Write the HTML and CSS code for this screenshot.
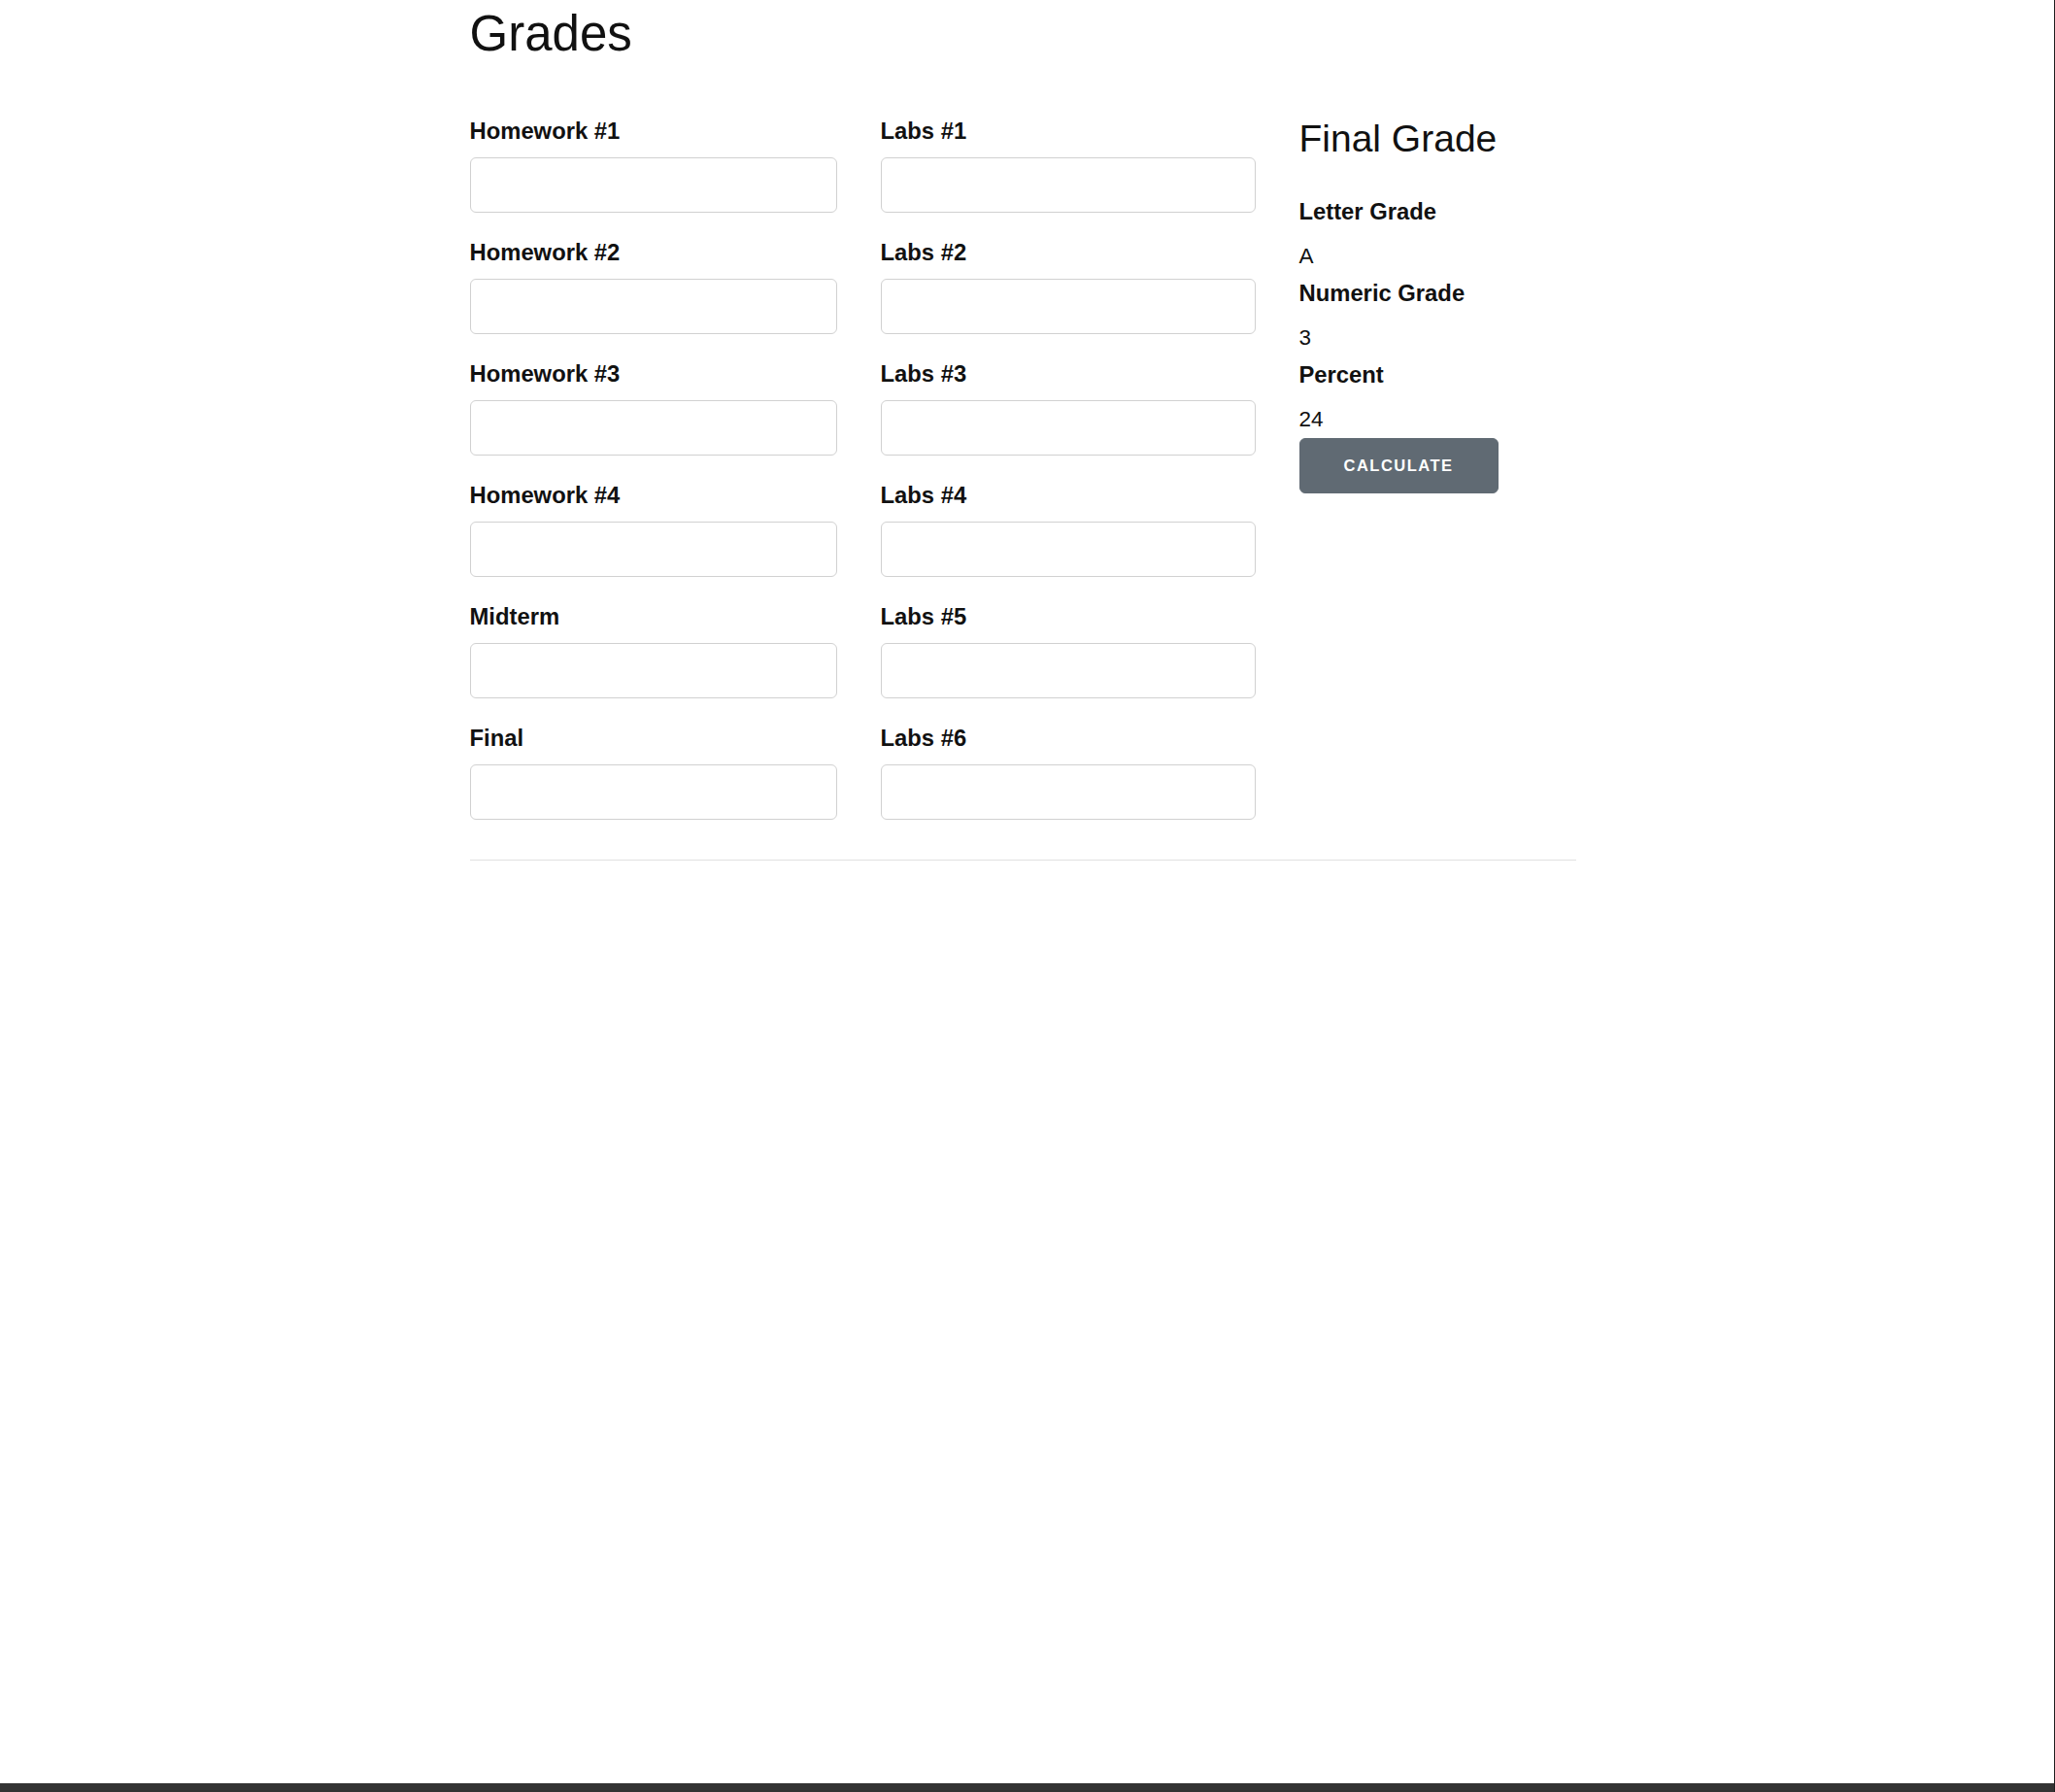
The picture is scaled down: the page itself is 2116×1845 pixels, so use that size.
FILE: index.html
```html
<!DOCTYPE html>
<html lang="en">
<head>
<meta charset="utf-8">
<title>Grades</title>
<link rel="stylesheet" href="styles.css">
</head>
<body>
<main class="page">
  <div class="container">
    <h1 class="title">Grades</h1>
    <div class="row">
      <form class="fields">
        <div class="field"><label>Homework #1</label><input type="text"></div>
        <div class="field"><label>Labs #1</label><input type="text"></div>
        <div class="field"><label>Homework #2</label><input type="text"></div>
        <div class="field"><label>Labs #2</label><input type="text"></div>
        <div class="field"><label>Homework #3</label><input type="text"></div>
        <div class="field"><label>Labs #3</label><input type="text"></div>
        <div class="field"><label>Homework #4</label><input type="text"></div>
        <div class="field"><label>Labs #4</label><input type="text"></div>
        <div class="field"><label>Midterm</label><input type="text"></div>
        <div class="field"><label>Labs #5</label><input type="text"></div>
        <div class="field"><label>Final</label><input type="text"></div>
        <div class="field"><label>Labs #6</label><input type="text"></div>
      </form>
      <section class="result">
        <h2 class="result-title">Final Grade</h2>
        <div class="result-label">Letter Grade</div>
        <div class="result-value">A</div>
        <div class="result-label">Numeric Grade</div>
        <div class="result-value">3</div>
        <div class="result-label">Percent</div>
        <div class="result-value">24</div>
        <button class="btn" type="button">Calculate</button>
      </section>
    </div>
    <hr class="divider">
  </div>
</main>
<div class="bottom-bar"></div>
</body>
</html>
```

FILE: styles.css
```css
html, body {
  height: 100%;
}

body {
  margin: 0;
  display: flex;
  flex-direction: column;
  min-height: 100vh;
  box-sizing: border-box;
  border-right: 1px solid #1e1e1e;
  background: #fff;
  color: #222;
  font-family: "Liberation Sans", Arial, sans-serif;
}

.page {
  flex: 1;
}

.container {
  width: 1139px;
  margin-left: calc(50% - 574px);
}

.title {
  margin: 4px 0 50px;
  font-size: 51px;
  line-height: 62px;
  font-weight: 400;
  color: #111;
}

.row {
  display: flex;
  gap: 45px;
  align-items: flex-start;
}

.fields {
  display: grid;
  grid-template-columns: 378px 386px;
  column-gap: 45px;
  row-gap: 22px;
  margin: 0;
}

.field {
  display: flex;
  flex-direction: column;
}

.field label,
.result-label {
  display: block;
  font-size: 23.8px;
  line-height: 38px;
  font-weight: 700;
  color: #111;
}

.field label {
  margin-bottom: 8px;
}

.field input {
  box-sizing: border-box;
  height: 57px;
  width: 100%;
  padding: 9px 15px;
  border: 1px solid #d1d1d1;
  border-radius: 6px;
  background: #fff;
  font: inherit;
  font-size: 22.5px;
}

.result {
  width: 285px;
  display: flex;
  flex-direction: column;
  align-items: flex-start;
}

.result-title {
  margin: 0 0 29px;
  font-size: 39px;
  line-height: 54px;
  font-weight: 400;
  color: #111;
}

.result-label {
  margin-bottom: 8px;
}

.result-value {
  font-size: 22.5px;
  line-height: 38px;
  color: #111;
}

.btn {
  box-sizing: border-box;
  height: 57px;
  padding: 0 45px;
  border: 1px solid #606a73;
  border-radius: 6px;
  background: #606a73;
  color: #fff;
  font-family: "Liberation Sans", Arial, sans-serif;
  font-size: 16.5px;
  font-weight: 700;
  letter-spacing: 1.5px;
  text-transform: uppercase;
  cursor: pointer;
}

.divider {
  margin: 41px 0 0;
  border: 0;
  border-top: 1px solid #e1e1e1;
  height: 0;
}

.bottom-bar {
  height: 9px;
  background: #333;
}
```
